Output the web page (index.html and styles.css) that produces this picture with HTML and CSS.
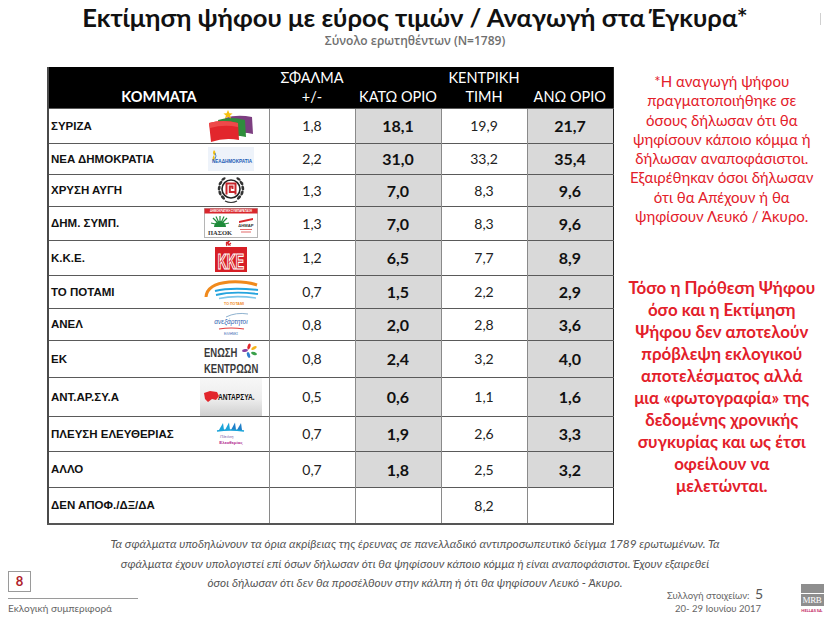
FILE: index.html
```html
<!DOCTYPE html>
<html lang="el">
<head>
<meta charset="utf-8">
<title>Εκτίμηση ψήφου</title>
<link rel="stylesheet" href="styles.css">
</head>
<body>
<div class="page">
  <header class="head">
    <h1 class="title">Εκτίμηση ψήφου με εύρος τιμών / Αναγωγή στα Έγκυρα*</h1>
    <div class="subtitle">Σύνολο ερωτηθέντων (N=1789)</div>
    <span class="corner-mark"></span>
  </header>

  <main class="main">
    <table class="grid">
      <thead>
        <tr>
          <th class="c-party kom">ΚΟΜΜΑΤΑ</th>
          <th class="c-num">ΣΦΑΛΜΑ<br>+/-</th>
          <th class="c-num">ΚΑΤΩ ΟΡΙΟ</th>
          <th class="c-num">ΚΕΝΤΡΙΚΗ<br>ΤΙΜΗ</th>
          <th class="c-num">ΑΝΩ ΟΡΙΟ</th>
        </tr>
      </thead>
      <tbody>
        <tr>
          <td class="c-party"><div class="pc"><span class="pname">ΣΥΡΙΖΑ</span><span class="logo">
            <svg width="52" height="34" viewBox="0 0 52 34">
              <path d="M20 9 Q32 5 47 8 L48 25 Q36 22 23 26 Z" fill="#7c3e80"/>
              <path d="M13 11 Q26 7 40 11 L41 28 Q28 25 15 29 Z" fill="#2f8d3c"/>
              <path d="M4 14 Q18 10 33 14 L34 31 Q20 28 6 33 Z" fill="#e2262c"/>
              <path d="M4 14 Q18 10 33 14 L33 18 Q19 15 5 19 Z" fill="#ee4a4a"/>
              <polygon points="23,1 24.4,4.2 27.6,4.4 25.1,6.4 26,9.5 23,7.8 20,9.5 20.9,6.4 18.4,4.4 21.6,4.2" fill="#f6c10f"/>
            </svg></span></div></td>
          <td class="n">1,8</td><td class="n g b">18,1</td><td class="n">19,9</td><td class="n g b">21,7</td>
        </tr>
        <tr>
          <td class="c-party"><div class="pc"><span class="pname">ΝΕΑ ΔΗΜΟΚΡΑΤΙΑ</span><span class="logo">
            <svg width="46" height="24" viewBox="0 0 46 24">
              <rect x="0" y="0" width="46" height="24" fill="#eef3fa"/>
              <path d="M6 3 Q9 6 6 9 Q8 11 5 14 Q4 10 6 8 Q4 6 6 3 Z" fill="#f2bf10"/>
              <path d="M7 6 Q9 9 7 12" stroke="#2a6bc6" stroke-width="0.8" fill="none"/>
              <text x="24" y="16" class="svgt nd">ΝΕΑΔΗΜΟΚΡΑΤΙΑ</text>
            </svg></span></div></td>
          <td class="n">2,2</td><td class="n g b">31,0</td><td class="n">33,2</td><td class="n g b">35,4</td>
        </tr>
        <tr>
          <td class="c-party"><div class="pc"><span class="pname">ΧΡΥΣΗ ΑΥΓΗ</span><span class="logo">
            <svg width="30" height="30" viewBox="0 0 30 30">
              <g fill="#333">
                <ellipse cx="4" cy="18" rx="1.4" ry="2.6" transform="rotate(-20 4 18)"/>
                <ellipse cx="3.2" cy="13" rx="1.4" ry="2.6" transform="rotate(10 3.2 13)"/>
                <ellipse cx="4.5" cy="8" rx="1.4" ry="2.6" transform="rotate(35 4.5 8)"/>
                <ellipse cx="7.5" cy="4" rx="1.3" ry="2.4" transform="rotate(55 7.5 4)"/>
                <ellipse cx="7" cy="22.5" rx="1.4" ry="2.6" transform="rotate(-45 7 22.5)"/>
                <ellipse cx="26" cy="18" rx="1.4" ry="2.6" transform="rotate(20 26 18)"/>
                <ellipse cx="26.8" cy="13" rx="1.4" ry="2.6" transform="rotate(-10 26.8 13)"/>
                <ellipse cx="25.5" cy="8" rx="1.4" ry="2.6" transform="rotate(-35 25.5 8)"/>
                <ellipse cx="22.5" cy="4" rx="1.3" ry="2.4" transform="rotate(-55 22.5 4)"/>
                <ellipse cx="23" cy="22.5" rx="1.4" ry="2.6" transform="rotate(45 23 22.5)"/>
              </g>
              <path d="M9 26 Q15 29 21 26" stroke="#333" stroke-width="1.2" fill="none"/>
              <circle cx="15" cy="14" r="9" fill="#fff" stroke="#222" stroke-width="1.6"/>
              <path d="M10.5 19.5 V8.5 H19.5 V17 H13.8 V11.5 H16.5 V14 M19.5 17 V19.5" stroke="#c8262c" stroke-width="2" fill="none"/>
            </svg></span></div></td>
          <td class="n">1,3</td><td class="n g b">7,0</td><td class="n">8,3</td><td class="n g b">9,6</td>
        </tr>
        <tr>
          <td class="c-party"><div class="pc"><span class="pname">ΔΗΜ. ΣΥΜΠ.</span><span class="logo">
            <svg width="54" height="30" viewBox="0 0 54 30">
              <rect x="0.5" y="0.5" width="53" height="29" fill="#fff" stroke="#b5b5b5"/>
              <rect x="0.5" y="0.5" width="53" height="5" fill="#d9262c"/>
              <text x="27" y="4.2" class="svgt ds">ΔΗΜΟΚΡΑΤΙΚΗ ΣΥΜΠΑΡΑΤΑΞΗ</text>
              <g stroke="#1f8b3a" stroke-width="1.2">
                <line x1="16" y1="17" x2="16" y2="8"/><line x1="16" y1="17" x2="9" y2="10"/>
                <line x1="16" y1="17" x2="23" y2="10"/><line x1="16" y1="17" x2="7" y2="15"/>
                <line x1="16" y1="17" x2="25" y2="15"/><line x1="16" y1="17" x2="12" y2="8.5"/>
                <line x1="16" y1="17" x2="20" y2="8.5"/>
              </g>
              <path d="M10 19 A6 6 0 0 1 22 19 Z" fill="#1f8b3a"/>
              <text x="16" y="26.5" class="svgt pasok">ΠΑΣΟΚ</text>
              <path d="M35 13 L49 10 L49 12 L35 15 Z" fill="#d9262c"/>
              <text x="42" y="19" class="svgt dimar">ΔΗΜΑΡ</text>
              <rect x="36" y="21" width="12" height="1" fill="#e46a6a"/>
              <rect x="37" y="23.5" width="10" height="1" fill="#e46a6a"/>
            </svg></span></div></td>
          <td class="n">1,3</td><td class="n g b">7,0</td><td class="n">8,3</td><td class="n g b">9,6</td>
        </tr>
        <tr>
          <td class="c-party"><div class="pc"><span class="pname">Κ.Κ.Ε.</span><span class="logo">
            <svg width="36" height="34" viewBox="0 0 36 34">
              <path d="M14 5 Q12 1.5 16 0.5 Q14 2.5 15.5 4 L18 2" stroke="#d71f26" stroke-width="1.1" fill="none"/>
              <line x1="13" y1="1" x2="17.5" y2="4.5" stroke="#d71f26" stroke-width="1.1"/>
              <rect x="2" y="6" width="32" height="25" fill="#d71f26"/>
              <text transform="translate(18 28) scale(1 1.75)" class="svgt kke">ΚΚΕ</text>
            </svg></span></div></td>
          <td class="n">1,2</td><td class="n g b">6,5</td><td class="n">7,7</td><td class="n g b">8,9</td>
        </tr>
        <tr>
          <td class="c-party"><div class="pc"><span class="pname">ΤΟ ΠΟΤΑΜΙ</span><span class="logo">
            <svg width="60" height="28" viewBox="0 0 60 28">
              <path d="M5 19 Q6 6 28 4 Q44 3 56 7" stroke="#f08a1d" stroke-width="3" fill="none"/>
              <path d="M14 13 Q30 9 57 12" stroke="#25a4de" stroke-width="2" fill="none"/>
              <path d="M15 17 Q32 13 57 16" stroke="#25a4de" stroke-width="1.8" fill="none"/>
              <path d="M18 20.5 Q34 17 55 20" stroke="#7cc6ea" stroke-width="1.6" fill="none"/>
              <text x="33" y="26.5" class="svgt pot">ΤΟ ΠΟΤΑΜΙ</text>
            </svg></span></div></td>
          <td class="n">0,7</td><td class="n g b">1,5</td><td class="n">2,2</td><td class="n g b">2,9</td>
        </tr>
        <tr>
          <td class="c-party"><div class="pc"><span class="pname">ΑΝΕΛ</span><span class="logo">
            <svg width="50" height="28" viewBox="0 0 50 28">
              <path d="M20 7 Q30 2 42 4" stroke="#8fb2cf" stroke-width="1" fill="none"/>
              <text x="25" y="14" class="svgt anel">ανεξάρτητοι</text>
              <path d="M13 19 Q25 17 38 19" stroke="#e23a3a" stroke-width="1.2" fill="none"/>
              <text x="25" y="25" class="svgt anel2">ΕΛΛΗΝΕΣ</text>
            </svg></span></div></td>
          <td class="n">0,8</td><td class="n g b">2,0</td><td class="n">2,8</td><td class="n g b">3,6</td>
        </tr>
        <tr>
          <td class="c-party"><div class="pc"><span class="pname">ΕΚ</span><span class="logo">
            <svg width="60" height="34" viewBox="0 0 60 34">
              <rect x="0" y="0" width="60" height="34" fill="#fff"/>
              <text transform="translate(3 15) scale(1 1.4)" class="svgt ek">ΕΝΩΣΗ</text>
              <text transform="translate(3 31) scale(1 1.4)" class="svgt ek">ΚΕΝΤΡΩΩΝ</text>
              <ellipse cx="48" cy="4.5" rx="1.5" ry="3" fill="#e2262c" transform="rotate(20 48 4.5)"/>
              <ellipse cx="53" cy="6" rx="1.5" ry="3" fill="#f5b31a" transform="rotate(60 53 6)"/>
              <ellipse cx="53" cy="11.5" rx="1.5" ry="3" fill="#3aa04a" transform="rotate(110 53 11.5)"/>
              <ellipse cx="47.5" cy="13" rx="1.5" ry="3" fill="#2f7fd0" transform="rotate(160 47.5 13)"/>
              <ellipse cx="44" cy="8.5" rx="1.5" ry="3" fill="#8a3fa0" transform="rotate(80 44 8.5)"/>
            </svg></span></div></td>
          <td class="n">0,8</td><td class="n g b">2,4</td><td class="n">3,2</td><td class="n g b">4,0</td>
        </tr>
        <tr>
          <td class="c-party"><div class="pc"><span class="pname">ΑΝΤ.ΑΡ.ΣΥ.Α</span><span class="logo">
            <svg width="62" height="38" viewBox="0 0 62 38">
              <defs>
                <linearGradient id="ag" x1="0" y1="0" x2="0" y2="1">
                  <stop offset="0" stop-color="#f7f7f7"/>
                  <stop offset="0.55" stop-color="#ededed"/>
                  <stop offset="1" stop-color="#cfcfcf"/>
                </linearGradient>
              </defs>
              <rect x="0" y="0" width="62" height="38" fill="url(#ag)"/>
              <path d="M4 15 L10 13 L17 14 L19 18 L16 22 L12 21 L8 24 L5 21 Z" fill="#e2262c"/>
              <text transform="translate(18 22) scale(1 1.5)" class="svgt ant">ΑΝΤΑΡΣΥΑ.</text>
            </svg></span></div></td>
          <td class="n">0,5</td><td class="n g b">0,6</td><td class="n">1,1</td><td class="n g b">1,6</td>
        </tr>
        <tr>
          <td class="c-party"><div class="pc"><span class="pname">ΠΛΕΥΣΗ ΕΛΕΥΘΕΡΙΑΣ</span><span class="logo">
            <svg width="42" height="26" viewBox="0 0 42 26">
              <path d="M9 9 L13 2 L14 9 Z" fill="#1aa3d9"/>
              <path d="M15 9 L19 1.5 L20 9 Z" fill="#1aa3d9"/>
              <path d="M21 9 L25 1.5 L26 9 Z" fill="#1f7fc8"/>
              <path d="M27 9 L31 2 L32 9 Z" fill="#1f7fc8"/>
              <path d="M7 10 Q20 8 34 10" stroke="#1aa3d9" stroke-width="1.4" fill="none"/>
              <text x="10" y="17" class="svgt pl1">Πλεύση</text>
              <text x="21" y="22.5" class="svgt pl2">Ελευθερίας</text>
            </svg></span></div></td>
          <td class="n">0,7</td><td class="n g b">1,9</td><td class="n">2,6</td><td class="n g b">3,3</td>
        </tr>
        <tr>
          <td class="c-party"><div class="pc"><span class="pname">ΑΛΛΟ</span></div></td>
          <td class="n">0,7</td><td class="n g b">1,8</td><td class="n">2,5</td><td class="n g b">3,2</td>
        </tr>
        <tr>
          <td class="c-party"><div class="pc"><span class="pname">ΔΕΝ ΑΠΟΦ./ΔΞ/ΔΑ</span></div></td>
          <td class="n"></td><td class="n"></td><td class="n">8,2</td><td class="n"></td>
        </tr>
      </tbody>
    </table>

    <aside class="notes">
      <p class="note1">*Η αναγωγή ψήφου<br>πραγματοποιήθηκε σε<br>όσους δήλωσαν ότι θα<br>ψηφίσουν κάποιο κόμμα ή<br>δήλωσαν αναποφάσιστοι.<br>Εξαιρέθηκαν όσοι δήλωσαν<br>ότι θα Απέχουν ή θα<br>ψηφίσουν Λευκό / Άκυρο.</p>
      <p class="note2">Τόσο η Πρόθεση Ψήφου<br>όσο και η Εκτίμηση<br>Ψήφου δεν αποτελούν<br>πρόβλεψη εκλογικού<br>αποτελέσματος αλλά<br>μια «φωτογραφία» της<br>δεδομένης χρονικής<br>συγκυρίας και ως έτσι<br>οφείλουν να<br>μελετώνται.</p>
    </aside>
  </main>

  <footer class="foot">
    <p class="disclaimer">Τα σφάλματα υποδηλώνουν τα όρια ακρίβειας της έρευνας σε πανελλαδικό αντιπροσωπευτικό δείγμα 1789 ερωτωμένων. Τα<br>σφάλματα έχουν υπολογιστεί επί όσων δήλωσαν ότι θα ψηφίσουν κάποιο κόμμα ή είναι αναποφάσιστοι. Έχουν εξαιρεθεί<br>όσοι δήλωσαν ότι δεν θα προσέλθουν στην κάλπη ή ότι θα ψηφίσουν Λευκό - Άκυρο.</p>
    <div class="bar">
      <div class="bar-left">
        <div class="pageno">8</div>
        <div class="rule"></div>
        <div class="section">Εκλογική συμπεριφορά</div>
      </div>
      <div class="bar-right">
        <div class="collect">
          <div class="c1">Συλλογή στοιχείων: <span class="five">5</span></div>
          <div class="c2">20- 29 Ιουνίου 2017</div>
        </div>
        <div class="mrb">
          <div class="mrb-top"></div>
          <div class="mrb-mid">MRB</div>
          <div class="mrb-sub">HELLAS SA.</div>
        </div>
      </div>
    </div>
  </footer>
</div>
</body>
</html>
```

FILE: styles.css
```css
* { box-sizing: border-box; }
html, body { margin: 0; padding: 0; background: #fff; }
body { font-family: "Lato", "Open Sans", "DejaVu Sans", sans-serif; color: #111; }

.page { width: 830px; height: 623px; position: relative; overflow: hidden; }

.head { text-align: center; padding-top: 1px; }
.title {
  margin: 0;
  font-size: 25.6px;
  line-height: 32px;
  font-weight: 700;
  color: #111;
}
.subtitle {
  font-family: "Open Sans", sans-serif;
  font-size: 12px;
  line-height: 16px;
  color: #6f6f6f;
  font-weight: 600;
}
.corner-mark {
  position: absolute; right: 9px; top: 13px;
  width: 1px; height: 12px; background: #d0d0d0;
}

.main {
  display: flex;
  padding-left: 47px;
  margin-top: 18px;
}

.grid {
  border-collapse: collapse;
  width: 565px;
  table-layout: fixed;
  border-left: 2px solid #4a4a4a;
  border-right: 1px solid #222;
  border-bottom: 2px solid #555;
}
.grid th {
  background: #000;
  color: #fff;
  font-weight: 400;
  font-size: 14.5px;
  line-height: 19px;
  vertical-align: bottom;
  padding: 0 0 2px 0;
  height: 41px;
  text-align: center;
  white-space: nowrap;
}
.grid th.kom { font-weight: 700; }
.grid th.c-party { width: 221px; }
.grid th.c-num { width: 86px; }

.grid td {
  border-top: 1px solid #5a5a5a;
  padding: 0;
  vertical-align: middle;
}
.grid td.n {
  border-left: 1px solid #8a8a8a;
  text-align: center;
  font-size: 14px;
  color: #222;
}
.grid td.g { background: #d9d9d9; }
.grid td.b { font-weight: 700; font-size: 16px; color: #111; }

.grid tbody tr:nth-child(1) td,
.grid tbody tr:nth-child(2) td { height: 31px; }
.grid tbody tr:nth-child(3) td { height: 32px; }
.grid tbody tr:nth-child(4) td,
.grid tbody tr:nth-child(5) td { height: 34px; }
.grid tbody tr:nth-child(6) td { height: 33px; }
.grid tbody tr:nth-child(7) td { height: 32px; }
.grid tbody tr:nth-child(8) td { height: 37px; }
.grid tbody tr:nth-child(9) td { height: 38px; }
.grid tbody tr:nth-child(10) td { height: 35px; }
.grid tbody tr:nth-child(11) td { height: 36px; }
.grid tbody tr:nth-child(12) td { height: 37px; }

.pc { display: flex; align-items: center; height: 100%; }
.pname {
  flex: 1;
  font-family: "Liberation Sans", Arial, sans-serif;
  font-weight: 700;
  font-size: 11.5px;
  padding-left: 2px;
  color: #111;
  white-space: nowrap;
}
.logo {
  width: 72px;
  display: flex;
  justify-content: center;
  align-items: center;
  margin-right: 2px;
}
.logo svg { display: block; }

.svgt { font-family: "Liberation Sans", Arial, sans-serif; text-anchor: middle; }
.nd { font-size: 4.6px; fill: #1b5cb5; font-weight: 700; }
.ds { font-size: 2.8px; fill: #fff; font-weight: 700; }
.pasok { font-size: 6.5px; fill: #333; font-weight: 700; font-family: "Liberation Serif", serif; }
.dimar { font-size: 4.2px; fill: #333; font-weight: 700; }
.kke { font-size: 12.5px; font-weight: 700; fill: #d71f26; stroke: #fff; stroke-width: 0.7px; }
.pot { font-size: 3.6px; fill: #f08a1d; font-weight: 700; }
.anel { font-size: 6.5px; fill: #2e5fb0; font-style: italic; }
.anel2 { font-size: 3px; fill: #2e5fb0; }
.ek { font-size: 9.5px; fill: #3a3a3a; font-weight: 700; text-anchor: start; }
.ant { font-size: 6.6px; fill: #111; font-weight: 700; text-anchor: start; }
.pl1 { font-size: 4px; fill: #7a5aa8; font-style: italic; text-anchor: start; }
.pl2 { font-size: 4.4px; fill: #b0208a; font-weight: 700; }

.notes {
  flex: 1;
  padding-top: 5px;
  text-align: center;
  color: #e3202a;
}
.note1 {
  margin: 0;
  font-size: 15px;
  line-height: 19.3px;
}
.note2 {
  margin: 51px 0 0 0;
  font-size: 16.9px;
  line-height: 21.9px;
  font-weight: 700;
}

.foot { margin-top: 9px; }
.disclaimer {
  margin: 0;
  text-align: center;
  font-style: italic;
  font-size: 11.8px;
  line-height: 19.5px;
  color: #555;
}
.bar {
  display: flex;
  justify-content: space-between;
  align-items: flex-end;
  margin-top: -22px;
  padding: 0 3px 0 8px;
}
.bar-left { width: 130px; }
.pageno {
  width: 23px; height: 21px;
  border: 1px solid #9a9a9a;
  color: #b0202a;
  font-weight: 700;
  font-size: 13px;
  line-height: 19px;
  text-align: center;
}
.rule { height: 1px; background: #9a9a9a; margin-top: 6px; width: 130px; }
.section { font-size: 10px; color: #666; margin-top: 2px; line-height: 14px; }

.bar-right { display: flex; align-items: flex-end; gap: 34px; }
.collect { font-size: 9.5px; color: #666; line-height: 13px; }
.c1 { text-align: left; padding-left: 2px; }
.five { font-size: 14px; color: #555; margin-left: 3px; }
.c2 { padding-left: 10px; }
.mrb { width: 30px; display: flex; flex-direction: column; align-items: center; padding-bottom: 2px; }
.mrb-top { width: 23px; height: 9px; background: #8e8e8e; }
.mrb-mid {
  width: 23px; height: 12px; margin-top: 1px;
  background: #8e8e8e; color: #fff;
  font-family: "Liberation Serif", serif;
  font-size: 9px; line-height: 12px; text-align: center;
  letter-spacing: -0.3px;
}
.mrb-sub { font-size: 4px; color: #c2185b; font-weight: 700; margin-top: 2px; line-height: 5px; white-space: nowrap; }
```
